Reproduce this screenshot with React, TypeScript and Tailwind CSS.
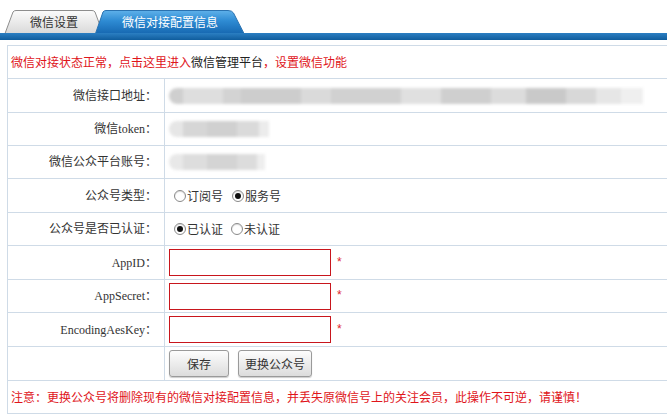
import React from "react";

const LABEL_FONT = "font-['Liberation_Serif','Noto_Sans_CJK_SC',serif]";
const CJK_FONT = "font-['Noto_Sans_CJK_SC','Liberation_Sans',sans-serif]";

// 行高（含底边线）
const ROW_H = {
  status: "h-[33px]",
  url: "h-[34px]",
  token: "h-[33px]",
  account: "h-[33px]",
  type: "h-[34px]",
  verified: "h-[33px]",
  appId: "h-[34px]",
  secret: "h-[33px]",
  aesKey: "h-[34px]",
  actions: "h-[34px]",
  notice: "h-[33px]",
};

function Radio({ checked, label }: { checked?: boolean; label: string }) {
  return (
    <span className="flex items-center">
      <span className="w-[12px] h-[12px] rounded-full border border-[#8a8a8a] bg-white flex items-center justify-center shadow-[inset_0_1px_1px_rgba(0,0,0,0.15)]">
        {checked && <span className="w-[6px] h-[6px] rounded-full bg-[#111]" />}
      </span>
      <span className={`ml-[1px] text-[12px] text-[#333] ${CJK_FONT}`}>{label}</span>
    </span>
  );
}

function Row({
  h,
  label,
  children,
}: {
  h: string;
  label?: string;
  children?: React.ReactNode;
}) {
  return (
    <div className={`flex border-b border-[#cfdbe7] ${h}`}>
      <div
        className={`w-[157px] shrink-0 border-r border-[#cfdbe7] flex items-center justify-end pr-[7px] text-[12px] text-[#333] ${LABEL_FONT}`}
      >
        {label}
      </div>
      <div className="flex-1 flex items-center pl-[4px]">{children}</div>
    </div>
  );
}

function Blurred({ segs }: { segs: [number, string][] }) {
  return (
    <div className="flex h-[16px] blur-[1.5px] rounded-l-full overflow-hidden">
      {segs.map(([w, c], i) => (
        <span key={i} className="h-full" style={{ width: w, background: c }} />
      ))}
    </div>
  );
}

function RequiredInput() {
  return (
    <div className="flex items-center">
      <input
        type="text"
        className="w-[162px] h-[27px] border border-[#c8161d] bg-white outline-none"
      />
      <span className="ml-[6px] text-[12px] text-[#e0262c] leading-none -mt-[2px] font-['Liberation_Sans',sans-serif]">
        *
      </span>
    </div>
  );
}

function Tabs() {
  return (
    <div className="relative h-[33px]">
      {/* 未激活标签 */}
      <div className="absolute left-[4px] top-[10px] w-[100px] h-[23px]">
        <svg width="100" height="23" viewBox="0 0 100 23" className="absolute inset-0">
          <defs>
            <linearGradient id="tabGray" x1="0" y1="0" x2="0" y2="1">
              <stop offset="0" stopColor="#fbfbfb" />
              <stop offset="1" stopColor="#d9d9d9" />
            </linearGradient>
          </defs>
          <path
            d="M1 23.5 L9 2 Q10 0.5 12 0.5 L88 0.5 Q90 0.5 91 2 L99 23.5 Z"
            fill="url(#tabGray)"
            stroke="#8d8d8d"
          />
        </svg>
        <span
          className={`relative flex h-full items-center justify-center text-[12px] text-[#333] ${CJK_FONT}`}
        >
          微信设置
        </span>
      </div>
      {/* 激活标签 */}
      <div className="absolute left-[95px] top-[10px] w-[150px] h-[23px]">
        <svg width="150" height="23" viewBox="0 0 150 23" className="absolute inset-0">
          <defs>
            <linearGradient id="tabBlue" x1="0" y1="0" x2="0" y2="1">
              <stop offset="0" stopColor="#5fb1ea" />
              <stop offset="0.45" stopColor="#2e8bd3" />
              <stop offset="1" stopColor="#1769b2" />
            </linearGradient>
          </defs>
          <path
            d="M0.5 23.5 L8 2 Q9 0.5 11 0.5 L133 0.5 Q137 0.5 138.5 3 L149 23.5 Z"
            fill="url(#tabBlue)"
            stroke="#2a72b0"
          />
        </svg>
        <span
          className={`relative flex h-full items-center justify-center text-[12px] text-white ${CJK_FONT}`}
        >
          微信对接配置信息
        </span>
      </div>
    </div>
  );
}

export default function App() {
  return (
    <div className="w-[667px] h-[416px] bg-white overflow-hidden">
      <Tabs />
      <div className="h-[7px] bg-gradient-to-b from-[#2b7fc3] to-[#0f5d9d]" />

      <div className="pt-[5px] pl-[7px]">
        <div className="w-[700px] border-l border-t border-[#cfdbe7]">
          {/* 状态提示 */}
          <div
            className={`flex items-center border-b border-[#cfdbe7] pl-[3px] text-[12px] ${ROW_H.status} ${CJK_FONT}`}
          >
            <span className="text-[#e0151b]">微信对接状态正常，点击这里进入</span>
            <span className="text-[#222]">微信管理平台</span>
            <span className="text-[#e0151b]">，设置微信功能</span>
          </div>

          <Row h={ROW_H.url} label="微信接口地址：">
            <Blurred
              segs={[
                [14, "#cfcfcf"],
                [40, "#dedede"],
                [18, "#d3d3d3"],
                [60, "#cdcdcd"],
                [30, "#dadada"],
                [70, "#d1d1d1"],
                [40, "#e0e0e0"],
                [50, "#cfcfcf"],
                [35, "#dcdcdc"],
                [40, "#c9c9c9"],
                [30, "#d8d8d8"],
                [25, "#e6e6e6"],
                [22, "#efefef"],
              ]}
            />
          </Row>

          <Row h={ROW_H.token} label="微信token：">
            <Blurred
              segs={[
                [14, "#e6e6e6"],
                [24, "#d6d6d6"],
                [30, "#d0d0d0"],
                [22, "#dadada"],
                [10, "#ececec"],
              ]}
            />
          </Row>

          <Row h={ROW_H.account} label="微信公众平台账号：">
            <Blurred
              segs={[
                [14, "#e8e8e8"],
                [24, "#dddddd"],
                [30, "#d4d4d4"],
                [20, "#dcdcdc"],
                [8, "#eeeeee"],
              ]}
            />
          </Row>

          <Row h={ROW_H.type} label="公众号类型：">
            <div className="flex items-center gap-[9px] pl-[5px]">
              <Radio label="订阅号" />
              <Radio checked label="服务号" />
            </div>
          </Row>

          <Row h={ROW_H.verified} label="公众号是否已认证：">
            <div className="flex items-center gap-[8px] pl-[5px]">
              <Radio checked label="已认证" />
              <Radio label="未认证" />
            </div>
          </Row>

          <Row h={ROW_H.appId} label="AppID：">
            <RequiredInput />
          </Row>

          <Row h={ROW_H.secret} label="AppSecret：">
            <RequiredInput />
          </Row>

          <Row h={ROW_H.aesKey} label="EncodingAesKey：">
            <RequiredInput />
          </Row>

          <Row h={ROW_H.actions}>
            <div className="flex items-center gap-[9px]">
              <button
                className={`w-[60px] h-[27px] rounded-[3px] border border-[#9a9a9a] bg-gradient-to-b from-[#fdfdfd] to-[#dcdcdc] text-[12px] text-[#333] shadow-[0_1px_1px_rgba(0,0,0,0.2)] ${CJK_FONT}`}
              >
                保存
              </button>
              <button
                className={`w-[74px] h-[27px] rounded-[3px] border border-[#9a9a9a] bg-gradient-to-b from-[#fdfdfd] to-[#dcdcdc] text-[12px] text-[#333] shadow-[0_1px_1px_rgba(0,0,0,0.2)] ${CJK_FONT}`}
              >
                更换公众号
              </button>
            </div>
          </Row>

          {/* 注意 */}
          <div
            className={`flex items-center border-b border-[#cfdbe7] pl-[3px] text-[12px] text-[#e0151b] ${ROW_H.notice} ${CJK_FONT}`}
          >
            注意：更换公众号将删除现有的微信对接配置信息，并丢失原微信号上的关注会员，此操作不可逆，请谨慎！
          </div>
        </div>
      </div>
    </div>
  );
}
